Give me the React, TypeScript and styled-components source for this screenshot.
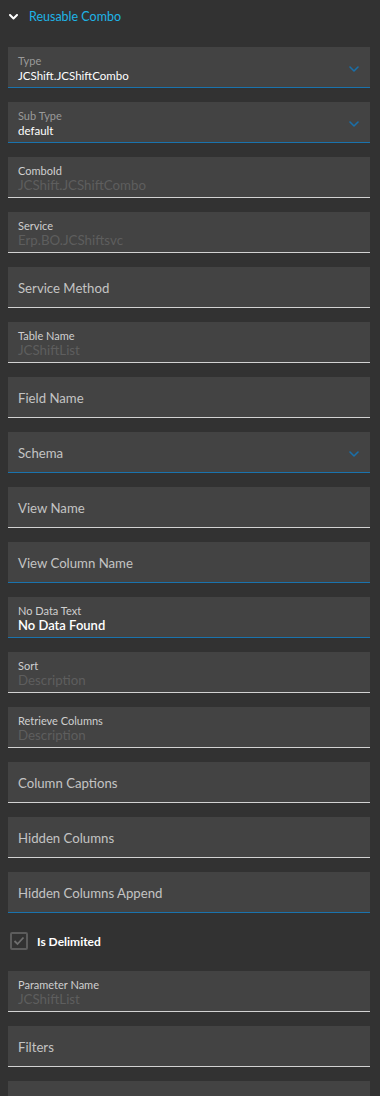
import * as React from 'react';
import styled, { createGlobalStyle } from 'styled-components';

const GlobalStyle = createGlobalStyle`
  html, body {
    margin: 0;
    padding: 0;
    background: #323232;
  }
  body {
    font-family: Lato, "Liberation Sans", sans-serif;
  }
`;

type FieldDef = {
  label: string;
  value?: string;
  kind?: 'select' | 'readonly' | 'filled' | 'empty';
  active?: boolean;
};

const fields: FieldDef[] = [
  { label: 'Type', value: 'JCShift.JCShiftCombo', kind: 'select', active: true },
  { label: 'Sub Type', value: 'default', kind: 'select', active: true },
  { label: 'ComboId', value: 'JCShift.JCShiftCombo', kind: 'readonly' },
  { label: 'Service', value: 'Erp.BO.JCShiftsvc', kind: 'readonly' },
  { label: 'Service Method', kind: 'empty' },
  { label: 'Table Name', value: 'JCShiftList', kind: 'readonly' },
  { label: 'Field Name', kind: 'empty' },
  { label: 'Schema', kind: 'select', active: true },
  { label: 'View Name', kind: 'empty' },
  { label: 'View Column Name', kind: 'empty', active: true },
  { label: 'No Data Text', value: 'No Data Found', kind: 'filled', active: true },
  { label: 'Sort', value: 'Description', kind: 'readonly' },
  { label: 'Retrieve Columns', value: 'Description', kind: 'readonly' },
  { label: 'Column Captions', kind: 'empty' },
  { label: 'Hidden Columns', kind: 'empty' },
  { label: 'Hidden Columns Append', kind: 'empty', active: true },
];

const moreFields: FieldDef[] = [
  { label: 'Parameter Name', value: 'JCShiftList', kind: 'readonly' },
  { label: 'Filters', kind: 'empty' },
  { label: '', kind: 'empty' },
];

function Chevron({ color, size }: { color: string; size: number }) {
  return (
    <svg width={size} height={size * 0.6} viewBox="0 0 10 6" fill="none">
      <path d="M1 1l4 4 4-4" stroke={color} strokeWidth="1.6" strokeLinecap="round" strokeLinejoin="round" />
    </svg>
  );
}

function Field({ f }: { f: FieldDef }) {
  const empty = f.kind === 'empty' || (f.kind === 'select' && !f.value);
  return (
    <FieldBox $active={!!f.active}>
      {empty ? (
        <Placeholder>{f.label}</Placeholder>
      ) : (
        <>
          <Label $dim={f.kind === 'select'}>{f.label}</Label>
          <Value $kind={f.kind || 'filled'}>{f.value}</Value>
        </>
      )}
      {f.kind === 'select' && (
        <Arrow>
          <Chevron color="#1a6fa8" size={10} />
        </Arrow>
      )}
    </FieldBox>
  );
}

export default function App() {
  return (
    <Panel>
      <GlobalStyle />
      <Header>
        <HeaderIcon>
          <svg width="9" height="6" viewBox="0 0 9 6" fill="none">
            <path d="M1 1l3.5 3.5L8 1" stroke="#ffffff" strokeWidth="2" strokeLinecap="round" strokeLinejoin="round" />
          </svg>
        </HeaderIcon>
        <Title>Reusable Combo</Title>
      </Header>
      <List>
        {fields.map((f, i) => (
          <Field key={i} f={f} />
        ))}
        <CheckRow>
          <CheckBox>
            <svg width="12" height="10" viewBox="0 0 12 10" fill="none">
              <path d="M1.5 5l3 3 6-6.5" stroke="#6e6e6e" strokeWidth="1.8" />
            </svg>
          </CheckBox>
          <CheckLabel>Is Delimited</CheckLabel>
        </CheckRow>
        {moreFields.map((f, i) => (
          <Field key={'m' + i} f={f} />
        ))}
      </List>
    </Panel>
  );
}

const Panel = styled.div`
  background: #323232;
  height: 1096px;
  padding: 0 10px 0 8px;
  overflow: hidden;
  box-sizing: border-box;
`;

const Header = styled.div`
  display: flex;
  align-items: center;
  height: 33px;
  margin-bottom: 14px;
`;

const HeaderIcon = styled.span`
  display: flex;
  width: 20px;
  padding-left: 1px;
  align-items: center;
`;

const Title = styled.span`
  color: #1eb4e6;
  font-size: 12.5px;
`;

const List = styled.div`
  display: flex;
  flex-direction: column;
  gap: 14px;
`;

const FieldBox = styled.div<{ $active: boolean }>`
  position: relative;
  height: 41px;
  box-sizing: border-box;
  background: #434343;
  border-bottom: 1px solid ${p => (p.$active ? '#1a73ad' : '#d2d2d2')};
  padding: 7px 30px 0 10px;
  display: flex;
  flex-direction: column;
`;

const Label = styled.div<{ $dim: boolean }>`
  font-size: 11px;
  line-height: 14px;
  color: ${p => (p.$dim ? '#9a9a9a' : '#cfcfcf')};
`;

const valueSize: Record<string, string> = {
  select: '11.5px',
  readonly: '13.3px',
  filled: '13px',
  empty: '13px',
};

const Value = styled.div<{ $kind: string }>`
  font-size: ${p => valueSize[p.$kind]};
  font-weight: ${p => (p.$kind === 'filled' ? 600 : 400)};
  line-height: 15px;
  color: ${p => (p.$kind === 'readonly' ? '#5e5e5e' : '#ffffff')};
  white-space: nowrap;
`;

const Placeholder = styled.div`
  font-size: 13.2px;
  line-height: 18px;
  margin-top: 5px;
  color: #c4c4c4;
`;

const Arrow = styled.span`
  position: absolute;
  right: 11px;
  top: 19px;
  display: flex;
`;

const CheckRow = styled.div`
  display: flex;
  align-items: center;
  padding: 5px 0 7px 2px;
  gap: 9px;
`;

const CheckBox = styled.span`
  width: 18px;
  height: 18px;
  box-sizing: border-box;
  border: 2px solid #5c5c5c;
  border-radius: 2px;
  display: flex;
  align-items: center;
  justify-content: center;
`;

const CheckLabel = styled.span`
  color: #ffffff;
  font-size: 12px;
  font-weight: bold;
`;
